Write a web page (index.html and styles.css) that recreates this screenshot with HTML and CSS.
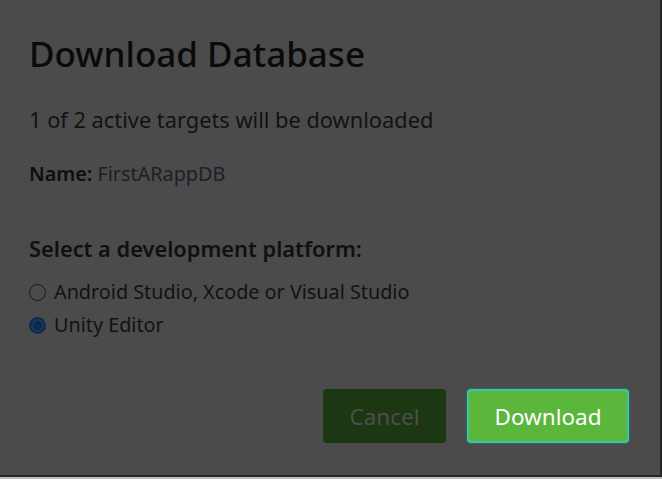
FILE: index.html
```html
<!DOCTYPE html>
<html>
<head>
<meta charset="utf-8">
<link rel="stylesheet" href="styles.css">
</head>
<body>
<div class="frame">
  <div class="dialog">
    <h1 class="title">Download Database</h1>
    <p class="summary">1 of 2 active targets will be downloaded</p>
    <p class="name"><span class="label">Name:</span> <span class="value">FirstARappDB</span></p>
    <h2 class="subtitle">Select a development platform:</h2>
    <div class="options">
      <label class="option"><span class="radio"></span><span>Android Studio, Xcode or Visual Studio</span></label>
      <label class="option"><span class="radio checked"></span><span>Unity Editor</span></label>
    </div>
    <div class="actions">
      <button class="btn cancel">Cancel</button>
      <button class="btn download">Download</button>
    </div>
  </div>
</div>
</body>
</html>
```
FILE: styles.css
```css
html, body {
  margin: 0;
  padding: 0;
  background: #bdbdbd;
}
body {
  font-family: "Noto Sans", "Open Sans", sans-serif;
  color: #101010;
}
.frame {
  width: 662px;
  height: 477px;
  background: #262626;
}
.dialog {
  width: 660px;
  height: 475px;
  box-sizing: border-box;
  background: #4b4b4b;
  padding: 30px 0 0 29px;
  display: flex;
  flex-direction: column;
}
.title {
  margin: 0;
  font-size: 35px;
  font-weight: 500;
  line-height: 48px;
  color: #0a0a0a;
}
.summary {
  margin: 27px 0 0;
  font-size: 21.8px;
  line-height: 30px;
  color: #121212;
  font-weight: 400;
}
.name {
  margin: 26px 0 0;
  font-size: 19.8px;
  line-height: 26px;
}
.label {
  font-weight: 600;
  color: #0e0e0e;
}
.value {
  color: #1a2129;
}
.subtitle {
  margin: 47px 0 0;
  font-size: 21.8px;
  font-weight: 600;
  line-height: 30px;
  color: #101010;
}
.options {
  margin-top: 15px;
  display: flex;
  flex-direction: column;
  gap: 7px;
}
.option {
  display: flex;
  align-items: center;
  gap: 8px;
  font-size: 19.8px;
  line-height: 26px;
  color: #121212;
}
.radio {
  width: 15px;
  height: 15px;
  border: 1px solid #1a1a1a;
  border-radius: 50%;
  box-sizing: content-box;
  flex: none;
}
.radio.checked {
  border: 2px solid #0a2c55;
  width: 13px;
  height: 13px;
  background: radial-gradient(circle, #032b5c 0 4.5px, #2c3440 5px 6.5px);
}
.actions {
  margin-top: 51px;
  margin-right: 31px;
  display: flex;
  justify-content: flex-end;
  gap: 21px;
}
.btn {
  font-family: "Noto Sans", "Open Sans", sans-serif;
  font-size: 22.5px;
  border-radius: 4px;
  height: 54px;
  cursor: pointer;
}
.cancel {
  width: 123px;
  background: #1c3813;
  border: none;
  color: #4e4e4e;
}
.download {
  width: 162px;
  background: #5ab73c;
  border: 2px solid #35c8a6;
  box-shadow: 0 0 2px #2d9a88;
  color: #ffffff;
}
```
